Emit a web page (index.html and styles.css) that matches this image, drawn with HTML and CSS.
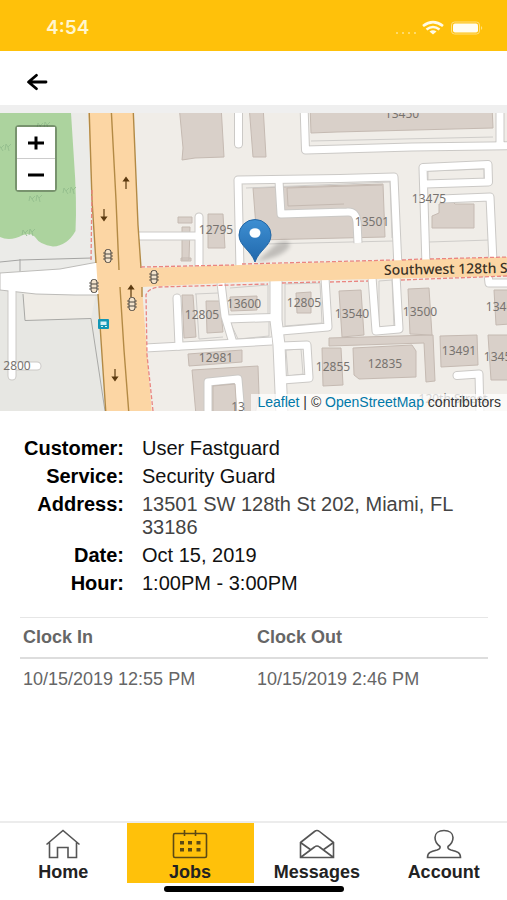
FILE: index.html
```html
<!DOCTYPE html>
<html lang="en">
<head>
  <meta charset="UTF-8">
  <meta name="viewport" content="width=device-width, initial-scale=1">
  <title>Job Details</title>
  <link rel="stylesheet" href="styles.css">
</head>
<body>

  <div class="app">
    <div class="status-bar">
      <span class="time">4:54</span>
      <svg class="status-icons" width="92" height="16" viewBox="0 0 92 16">
        <g fill="#ffe28a">
          <circle cx="4" cy="13" r="1"/><circle cx="10" cy="13" r="1"/><circle cx="16" cy="13" r="1"/><circle cx="22" cy="13" r="1"/>
        </g>
        <g fill="none" stroke="#fffbe6" stroke-width="2.600">
          <path d="M30 6 Q40 -1.800 50 6"/>
          <path d="M33.500 9.500 Q40 4.500 46.500 9.500"/>
        </g>
        <path d="M36.500 11.500 Q40 9 43.500 11.500 L40 14.500 Z" fill="#fffbe6"/>
        <rect x="58.500" y="2" width="28" height="12" rx="3" fill="none" stroke="#ffdf80"/>
        <rect x="60" y="3.500" width="25" height="9" rx="2" fill="#fffdf2"/>
        <path d="M88 6 Q90.500 8 88 10 Z" fill="#ffdf80"/>
      </svg>
    </div>

    <header class="top-bar">
      <button class="back" type="button" aria-label="Back">
        <svg width="22" height="18" viewBox="0 0 22 18" fill="none" stroke="#000" stroke-width="2.8" stroke-linecap="round" stroke-linejoin="round">
          <path d="M20 9 H3 M10.500 2.300 L2.500 9 L10.500 15.700"/>
        </svg>
      </button>
    </header>

    <div class="map">
      <svg class="map-tiles" viewBox="0 113 507 298" preserveAspectRatio="xMidYMid slice">
        <defs>
          <!-- roads are drawn twice: grey casing, then white fill -->
          <g id="roads" fill="none" stroke-linejoin="round">
            <path d="M238.500 100 V144" stroke-linecap="round"/>
            <path d="M304 105 L305.500 150 L412 147 L520 145.500 M500 105 V146"/>
            <path d="M240 270 L238 180 L340 178.500 L394 177 L398 268"/>
            <path d="M279 181 L281 214 L347 212 Q356 211 357 222 L358 243"/>
            <path d="M138 236 H198"/>
            <path d="M199 270 V217" stroke-linecap="round"/>
            <path d="M426 266 L423 167.500 L488 164.500 L488.500 182 L425 184"/>
            <path d="M441 199 L490 197 L493 262"/>
            <path d="M177 298 L179 346" stroke-linecap="round"/>
            <path d="M221 283 L225 316 L233 343"/>
            <path d="M226 319 L274 317.500"/>
            <path d="M145 348 L272 341"/>
            <path d="M325 278 L328 327 L281 331"/>
            <path d="M281 346 L307 345 L309 378 L282 380"/>
            <path d="M208 415 L208 382 L238 379 L241 415"/>
            <path d="M372 277 L376 331 L399 329 L396 275"/>
            <path d="M488 274 L489 283 H510"/>
            <path d="M457 375.500 L479 374 L480 415" stroke-linecap="round"/>
            <path d="M12 288 V376 M12 366 H37" stroke-linecap="round"/>
          </g>
          <g id="signal">
            <rect x="-3" y="-6.500" width="6" height="13" rx="2.500" fill="#f3e3cc" stroke="#4b4640" stroke-width="1"/>
            <path d="M-4 -4 V-2 M4 -4 V-2 M-4 -1 V1 M4 -1 V1 M-4 2 V4 M4 2 V4" stroke="#4b4640" stroke-width="0.800"/>
            <path d="M-3 -2 H3 M-3 2 H3" stroke="#4b4640" stroke-width="1"/>
          </g>
          <path id="oneway" d="M0 6 V-3 M-2.500 -2 L0 -5.500 L2.500 -2 Z" fill="#5b3a10" stroke="#5b3a10" stroke-width="1.200"/>
          <path id="bush" d="M-6 3 L-5 -2 L-3 1 L0 -2 M-3 1 L-1 4 M1 3 L2 -3 L4 0 L7 -3 M4 0 L5 4" fill="none" stroke="#96c08f" stroke-width="1"/>
          <linearGradient id="pin" x1="0" y1="0" x2="0" y2="1">
            <stop offset="0" stop-color="#3e8fd2"/>
            <stop offset="1" stop-color="#2168ac"/>
          </linearGradient>
          <filter id="soft" x="-20%" y="-50%" width="140%" height="200%"><feGaussianBlur stdDeviation="2"/></filter>
        </defs>

        <rect y="100" width="507" height="320" fill="#f0ede8"/>

        <!-- west side -->
        <path d="M0 100 H92 L97 300 L106 411 H0 Z" fill="#ebebe8"/>
        <path d="M0 290 L75 295 L99 295 L101 330 L106 411 H0 Z" fill="#e7e7e3"/>
        <path d="M0 113 H71 L74 160 Q77 200 75.500 231 Q67 246 53 246.500 Q40 245 35 237 Q31 232 23 235 Q10 242 0 237 Z" fill="#acd39e"/>
        <use href="#bush" x="4" y="147"/><use href="#bush" x="43" y="125"/><use href="#bush" x="69" y="190"/>
        <use href="#bush" x="35" y="198"/><use href="#bush" x="28" y="232"/>
        <path d="M0 262 L20 260 L92 258 M20 259 V272" fill="none" stroke="#a5a5a3" stroke-width="1"/>
        <path d="M23 293 L25 320.500 L91 318.500 L96 294 Z" fill="#efece6"/>

        <!-- buildings -->
        <g fill="#d9d0c9" stroke="#c5bab2" stroke-width="1">
          <path d="M179 105 H221 L224 157 L195 158 L182 160 L183 148 Z"/>
          <path d="M249 105 H263 L266 157 H253 Z"/>
          <path d="M310 105 H492 L493 128 L337 132 L311 133 Z"/>
          <path d="M253 188 L383 184 L385 237 L257 240 Z"/>
          <path d="M178 217 H192 V223 H178 Z M182 227 H190 L189 260 H182 Z M208 214 H223 L225 248 H208 Z M181 258 H191 V261 H181 Z"/>
          <path d="M432 228 V216 L439 213 V204 L452 201 L455 204 H474 V228 Z"/>
          <path d="M182 295 H193 L196 337 L184 338 Z"/>
          <path d="M206 301 H220 L223 332 L207 333 Z"/>
          <path d="M230 297 L257 296 V310 L231 311 Z"/>
          <path d="M296 293 L311 292 V313 H297 Z"/>
          <path d="M188 354 L242 350 V362 L189 366 Z"/>
          <path d="M192 370 L258 366 L259 394 L255 415 H196 Z"/>
          <path d="M322 348 H341 L343 385 L323 386 Z"/>
          <path d="M329 338 L433 335 L435 381 L426 382 L424 343 L329 346 Z"/>
          <path d="M339 291 L361 290 L364 335 L342 337 Z"/>
          <path d="M408 289 L429 288 L432 335 L410 334 Z"/>
          <path d="M353 348 L412 345 L416 351 V377 L359 379 L354 375 Z"/>
          <path d="M440 336 L477 335 L478 365 L441 367 Z"/>
          <path d="M494 290 H510 V324 L496 325 Z M488 335 H510 V380 H491 Z"/>
        </g>

        <!-- parcel outlines -->
        <g fill="none" stroke="#cfcdca" stroke-width="1">
          <path d="M265 244 L393 241 M429 242 L490 240 M246 188 L390 182 L392 238"/>
          <path d="M311 141 L493 137 M428 171 L484 169 V179 L428 181 Z"/>
          <path d="M195 294 L218 293 M196 294 L199 339 L223 337 M230 288 L268 285 V315 M230 322 L269 321 V336 L238 339 Z"/>
          <path d="M285 284 L320 283 L322 323 L285 326 Z M286 350 L301 349 L303 374 L288 376 Z M379 281 L392 280 L394 327 L379 328 Z"/>
        </g>

        <use href="#roads" stroke="#cbc9c6" stroke-width="9"/>
        <path d="M276 280 V320 L279 345 L282 415" fill="none" stroke="#cbc9c6" stroke-width="13"/>
        <path d="M0 273 L60 269 L98 262 L100 295 L75 295 L36 294 L0 290 Z" fill="#fff" stroke="#bdbcb9"/>
        <use href="#roads" stroke="#fff" stroke-width="7"/>
        <path d="M276 280 V320 L279 345 L282 415" fill="none" stroke="#fff" stroke-width="11"/>
        <path d="M283 213 L347 211 V184 L285 187 Z" fill="none"/>
        <path d="M287 188 L382 185 M287 188 L288 206 L344 204" fill="none" stroke="#c5bab2"/>
        <path d="M23 294 L25 320.500 L91 318.500 L105 411" fill="none" stroke="#a9a9a6"/>
        <path d="M213 386 L235 384 L237 415 H213 Z" fill="#d9d0c9" stroke="#c5bab2"/>

        <!-- main roads -->
        <path d="M88 105 L92 200 L98 290 L101 340 L106 415 H152 L146 340 L142 287 L245 282 L510 276 V257 L340 262 L141 268 L138 225 L133 105 Z" fill="#fcd6a4"/>
        <g fill="none" stroke="#b38a45" stroke-width="1.400">
          <path d="M89 105 L92 200 L96 263 M98 294 L101 340 L106 415"/>
          <path d="M111 105 L116 200 L119 270 M120 287 L124 350 L129 415"/>
          <path d="M133 105 L138 225 L141 268 M142 287 V297"/>
        </g>
        <g fill="none" stroke="#ea8580" stroke-width="1.300" stroke-dasharray="4 2">
          <path d="M92 190 L91 262 M141 267 L234 265 M242 264 L394 260 M402 260 L422 259 M430 259 L507 257"/>
          <path d="M153 411 L147 355 L146 295 Q148 288 160 287 L268 284 M282 283 L320 282 M330 282 L368 281 M401 280 L507 276"/>
        </g>
        <use href="#oneway" x="126" y="183"/>
        <use href="#oneway" transform="translate(104 215) rotate(180)"/>
        <use href="#oneway" x="131" y="291"/>
        <use href="#oneway" transform="translate(115 375) rotate(180)"/>
        <use href="#signal" x="108" y="256"/>
        <use href="#signal" x="94" y="286"/>
        <use href="#signal" x="154" y="277"/>
        <use href="#signal" x="132" y="304"/>
        <rect x="98" y="319" width="11" height="10" rx="1" fill="#1296b5"/>
        <path d="M100.500 321.500 H106.500 V325 H100.500 Z M101 326 H103 V327 H101 Z M105 326 H107 V327 H105 Z" fill="#d6f0f5"/>

        <g class="house-numbers">
          <text x="402" y="118">13450</text>
          <text x="216" y="234">12795</text>
          <text x="372" y="226">13501</text>
          <text x="429" y="203">13475</text>
          <text x="202" y="319">12805</text>
          <text x="244" y="308">13600</text>
          <text x="304" y="307">12805</text>
          <text x="352" y="318">13540</text>
          <text x="420" y="316">13500</text>
          <text x="503" y="311">13466</text>
          <text x="216" y="362">12981</text>
          <text x="333" y="371">12855</text>
          <text x="385" y="368">12835</text>
          <text x="459" y="355">13491</text>
          <text x="501" y="361">13451</text>
          <text x="17" y="370">2800</text>
          <text x="238" y="411">13</text>
          <text x="453" y="403">120th Street</text>
        </g>
        <text class="street-name" x="384" y="275" transform="rotate(-1 384 275)">Southwest 128th Street</text>

        <!-- marker -->
        <path d="M256 262 L276 244 Q288 238 290 245 Q286 256 256 262 Z" fill="#000" opacity="0.200" filter="url(#soft)"/>
        <path d="M255 262 C251 250 239 246 239 235 A16 15.500 0 0 1 271 235 C271 246 259 250 255 262 Z" fill="url(#pin)" stroke="#2467a5" stroke-width="1"/>
        <ellipse cx="255" cy="233" rx="5.500" ry="4.800" fill="#fff"/>
      </svg>

      <div class="zoom-control">
        <button type="button" aria-label="Zoom in">
          <svg width="16" height="14" viewBox="0 0 16 14"><path d="M0 7 H16 M8 0.500 V13.500" stroke="#000" stroke-width="3"/></svg>
        </button>
        <button type="button" aria-label="Zoom out">
          <svg width="16" height="14" viewBox="0 0 16 14"><path d="M0 7 H16" stroke="#000" stroke-width="3"/></svg>
        </button>
      </div>
      <div class="attribution"><a href="#leaflet">Leaflet</a> | © <a href="#osm">OpenStreetMap</a> contributors</div>
    </div>

    <main class="content">
      <dl class="details">
        <dt>Customer:</dt><dd>User Fastguard</dd>
        <dt>Service:</dt><dd>Security Guard</dd>
        <dt>Address:</dt><dd class="address">13501 SW 128th St 202, Miami, FL 33186</dd>
        <dt>Date:</dt><dd>Oct 15, 2019</dd>
        <dt>Hour:</dt><dd>1:00PM - 3:00PM</dd>
      </dl>

      <table class="clock-table">
        <thead>
          <tr><th scope="col">Clock In</th><th scope="col">Clock Out</th></tr>
        </thead>
        <tbody>
          <tr><td>10/15/2019 12:55 PM</td><td>10/15/2019 2:46 PM</td></tr>
        </tbody>
      </table>
    </main>

    <nav class="tab-bar">
      <a class="tab" href="#home">
        <svg class="tab-icon" viewBox="0 0 36 30">
          <path d="M1.500 15.500 L18 1.500 L34.500 15.500 M4.500 13.500 V28.500 H12.500 V18.500 H23 V28.500 H31.500 V13.500"/>
        </svg>
        Home
      </a>
      <a class="tab active" href="#jobs" aria-current="page">
        <svg class="tab-icon" viewBox="0 0 36 30">
          <rect x="1.500" y="4.500" width="33" height="24" rx="1.500"/>
          <path d="M12.500 1 V7 M23.500 1 V7"/>
          <path class="dots" d="M8 12 H12 V15.500 H8 Z M16 12 H20 V15.500 H16 Z M24.500 12 H28.500 V15.500 H24.500 Z M8 19 H12 V22.500 H8 Z M16 19 H20 V22.500 H16 Z M24.500 19 H28.500 V22.500 H24.500 Z"/>
        </svg>
        Jobs
      </a>
      <a class="tab" href="#messages">
        <svg class="tab-icon" viewBox="0 0 36 30">
          <path d="M1.500 13.500 L15.500 2.500 Q18 0.500 20.500 2.500 L34.500 13.500 V28.500 H1.500 Z M1.500 13.500 L12 21 M34.500 13.500 L24 21 M1.500 28.500 L15.500 18 Q18 16 20.500 18 L34.500 28.500"/>
        </svg>
        Messages
      </a>
      <a class="tab" href="#account">
        <svg class="tab-icon" viewBox="0 0 36 30">
          <path d="M14 17.500 C10.500 15 9 12.500 9 8.500 C9 4 13 1.500 18 1.500 S27 4 27 8.500 C27 12.500 25.500 15 22 17.500 C21.500 19.500 22.500 20.300 25 21 C31 22.500 34.500 23.500 34.500 28.500 H1.500 C1.500 23.500 5 22.500 11 21 C13.500 20.300 14.500 19.500 14 17.500 Z"/>
        </svg>
        Account
      </a>
    </nav>
    <div class="home-indicator"></div>
  </div>

</body>
</html>
```
FILE: styles.css
```css
* {
  box-sizing: border-box;
}

body {
  margin: 0;
  font-family: "Liberation Sans", Arial, sans-serif;
  font-size: 20px;
  color: #111;
  background: #fff;
}

button {
  padding: 0;
  border: 0;
  background: none;
  cursor: pointer;
}

.app {
  display: flex;
  flex-direction: column;
  min-height: 100vh;
}

.status-bar {
  display: flex;
  align-items: center;
  justify-content: space-between;
  height: 51px;
  padding: 4px 22px 0 46px;
  background: #ffc10a;
}

.time {
  font-family: Inter, sans-serif;
  font-size: 19px;
  font-weight: 600;
  color: #fff6cf;
}

.top-bar {
  display: flex;
  align-items: center;
  height: 62px;
  padding: 0 26px;
  border-bottom: 8px solid #efefef;
}

.back {
  display: flex;
  padding-top: 8px;
}

.map {
  position: relative;
  height: 298px;
  overflow: hidden;
}

.map-tiles {
  display: block;
  width: 100%;
  height: 100%;
}

.house-numbers {
  font-family: "Noto Sans", sans-serif;
  font-size: 12px;
  fill: #77736f;
  text-anchor: middle;
}

.street-name {
  font-family: "Noto Sans", sans-serif;
  font-size: 14px;
  font-weight: 500;
  fill: #3a3226;
}

.zoom-control {
  position: absolute;
  top: 12px;
  left: 15px;
  display: flex;
  flex-direction: column;
  border: 2px solid rgba(0, 0, 0, 0.3);
  border-radius: 4px;
}

.zoom-control button {
  display: flex;
  align-items: center;
  justify-content: center;
  width: 38px;
  height: 31px;
  background: #fff;
}

.zoom-control button + button {
  height: 32px;
  border-top: 1px solid #ccc;
}

.attribution {
  position: absolute;
  right: 0;
  bottom: 0;
  padding: 0 6px;
  font-size: 14px;
  line-height: 17px;
  color: #333;
  background: rgba(255, 255, 255, 0.7);
}

.attribution a {
  color: #0078a8;
  text-decoration: none;
}

.content {
  flex: 1;
  padding: 26px 19px 20px 20px;
}

.details {
  display: grid;
  grid-template-columns: 104px 1fr;
  gap: 5px 18px;
  margin: 0 0 22px;
  line-height: 23px;
}

.details dt {
  font-weight: bold;
  text-align: right;
  color: #000;
}

.details dd {
  margin: 0;
}

.details .address {
  color: #444;
}

.clock-table {
  width: 100%;
  table-layout: fixed;
  border-collapse: collapse;
  font-size: 18px;
  line-height: 20px;
  text-align: left;
  color: #666;
}

.clock-table th {
  padding: 9px 3px 10px;
  border-top: 1px solid #e6e6e6;
  border-bottom: 2px solid #ddd;
}

.clock-table td {
  padding: 10px 3px;
}

.tab-bar {
  display: grid;
  grid-template-columns: repeat(4, 1fr);
  border-top: 2px solid #ececec;
}

.tab {
  display: flex;
  flex-direction: column;
  align-items: center;
  gap: 3px;
  height: 60px;
  padding-top: 6px;
  font-size: 18px;
  font-weight: bold;
  line-height: 20px;
  color: #222;
  text-decoration: none;
}

.tab.active {
  background: #ffc10a;
}

.tab-icon {
  width: 36px;
  height: 30px;
  fill: none;
  stroke: #555;
  stroke-width: 1.6;
}

.active .tab-icon {
  stroke: #5c4a14;
}

.tab-icon .dots {
  fill: #5c4a14;
  stroke: none;
}

.home-indicator {
  width: 180px;
  height: 6px;
  margin: 3px auto 8px;
  border-radius: 3px;
  background: #000;
}
```
